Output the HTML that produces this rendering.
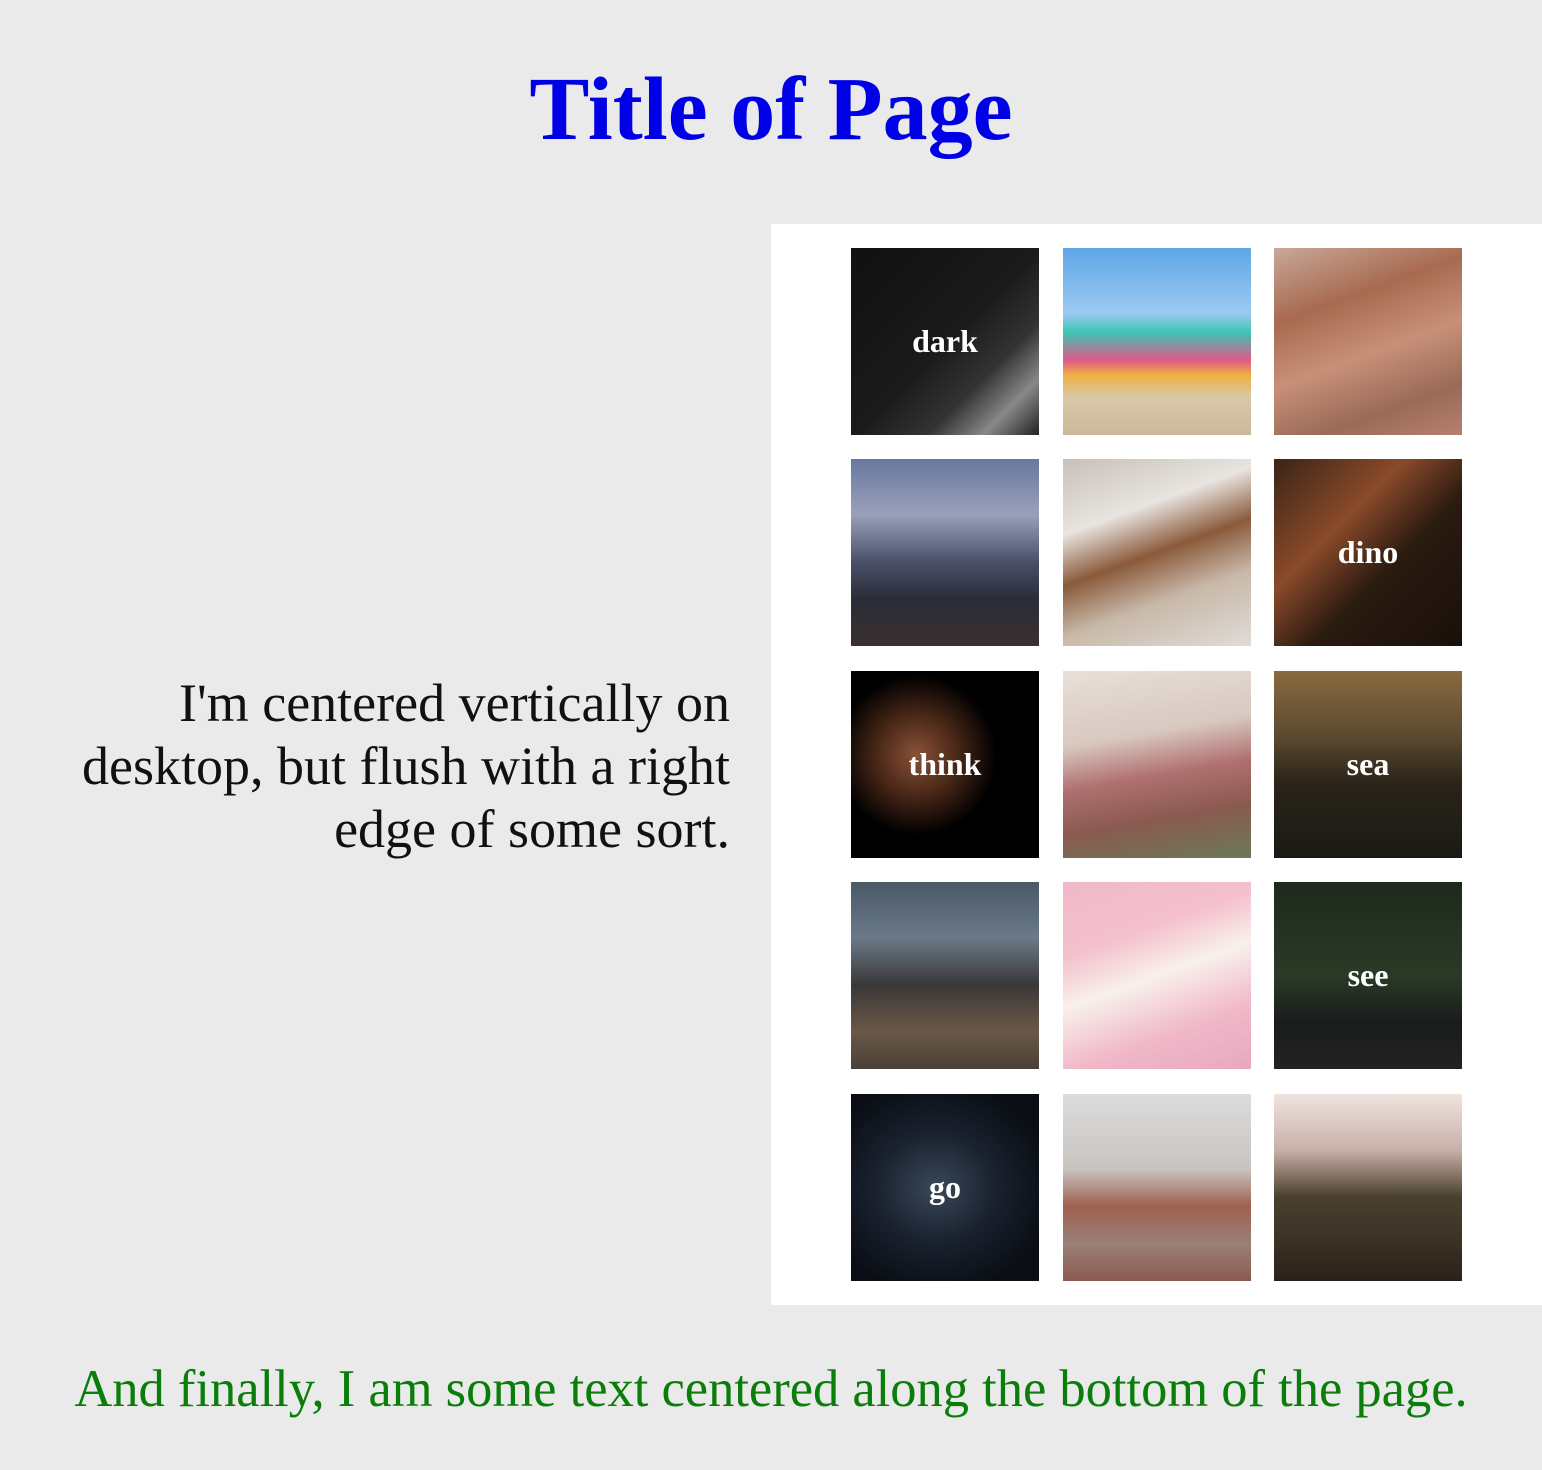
<!DOCTYPE html>
<html><head><meta charset="utf-8"><style>
html,body{margin:0;padding:0;}
body{width:1542px;height:1470px;background:#eaeaea;position:relative;overflow:hidden;font-family:"Liberation Serif",serif;}
h1{position:absolute;top:60px;left:0;width:1542px;margin:0;text-align:center;color:#0000e6;font-size:90px;font-weight:bold;line-height:100px;}
.panel{position:absolute;left:771px;top:224px;width:771px;height:1081px;background:#fff;}
.t{position:absolute;width:188px;height:187px;display:flex;align-items:center;justify-content:center;color:#fff;font-weight:bold;font-size:32px;}
.left{position:absolute;right:812px;top:672px;width:690px;text-align:right;font-size:54px;line-height:63px;color:#111;}
.bottom{position:absolute;top:1358px;left:0;width:1542px;text-align:center;color:#0a7d0a;font-size:52.5px;line-height:63px;}
</style></head><body>
<h1>Title of Page</h1>
<div class="panel"></div>
<div class="left">I'm centered vertically on desktop, but flush with a right edge of some sort.</div>

<div class="t" style="left:851px;top:248px;background:linear-gradient(135deg,#111 0%,#1a1a1a 50%,#333 70%,#888 85%,#222 100%)">dark</div>
<div class="t" style="left:1063px;top:248px;background:linear-gradient(180deg,#5ea6e6 0%,#9ccaf0 35%,#3cc4b4 45%,#e05a8a 60%,#f0b040 68%,#d8c8a8 80%,#cbb89a 100%)"></div>
<div class="t" style="left:1274px;top:248px;background:linear-gradient(160deg,#c8a898 0%,#a86a50 30%,#c89078 55%,#9a6a58 80%,#b88070 100%)"></div>

<div class="t" style="left:851px;top:459px;background:linear-gradient(180deg,#6878a0 0%,#9aa0b8 30%,#4a5068 55%,#2a2c38 75%,#3a3030 100%)"></div>
<div class="t" style="left:1063px;top:459px;background:linear-gradient(160deg,#c8c0b8 0%,#e8e4e0 30%,#8a5a3a 50%,#c8b8a8 70%,#e0dcd8 100%)"></div>
<div class="t" style="left:1274px;top:459px;background:linear-gradient(135deg,#3a2418 0%,#8a4a2a 35%,#2a1a10 60%,#1a100a 100%)">dino</div>

<div class="t" style="left:851px;top:671px;background:radial-gradient(circle at 35% 45%,#8a5238 0%,#4a2818 25%,#000 50%)">think</div>
<div class="t" style="left:1063px;top:671px;background:linear-gradient(170deg,#e8e0d8 0%,#d8c8c0 35%,#b07070 55%,#8a5a50 75%,#6a7a58 100%)"></div>
<div class="t" style="left:1274px;top:671px;background:linear-gradient(180deg,#8a6a40 0%,#5a4a30 35%,#2a2418 60%,#1a1a14 100%)">sea</div>

<div class="t" style="left:851px;top:882px;background:linear-gradient(180deg,#4a5868 0%,#6a7a88 30%,#3a3838 55%,#6a5848 80%,#4a4038 100%)"></div>
<div class="t" style="left:1063px;top:882px;background:linear-gradient(160deg,#f0b8c8 0%,#f4c0cc 30%,#f8f0ec 50%,#f0b8c8 75%,#e8a8c0 100%)"></div>
<div class="t" style="left:1274px;top:882px;background:linear-gradient(180deg,#1e2a1c 0%,#2a3a26 50%,#1a1c1c 75%,#222 100%)">see</div>

<div class="t" style="left:851px;top:1094px;background:radial-gradient(ellipse at 45% 50%,#3a4858 0%,#1a2230 40%,#0a0e14 80%)">go</div>
<div class="t" style="left:1063px;top:1094px;background:linear-gradient(180deg,#dcdcdc 0%,#c8c4c0 40%,#a06050 60%,#9a8078 80%,#8a5a50 100%)"></div>
<div class="t" style="left:1274px;top:1094px;background:linear-gradient(180deg,#f0e4e0 0%,#c8b0a8 30%,#4a4030 55%,#3a3024 80%,#2a2218 100%)"></div>

<div class="bottom">And finally, I am some text centered along the bottom of the page.</div>
</body></html>
